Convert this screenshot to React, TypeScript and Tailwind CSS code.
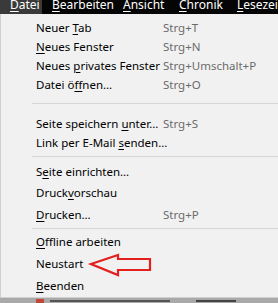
import type { ReactNode } from 'react'

type Item = { label: ReactNode; shortcut?: string; h: string } | { sep: string }

const u = (s: string) => <span className="underline underline-offset-2">{s}</span>

const ITEMS: Item[] = [
  { label: <>Neuer {u('T')}ab</>, shortcut: 'Strg+T', h: 'h-[19px]' },
  { label: <>{u('N')}eues Fenster</>, shortcut: 'Strg+N', h: 'h-[19px]' },
  { label: <>Neues {u('p')}rivates Fenster</>, shortcut: 'Strg+Umschalt+P', h: 'h-[19px]' },
  { label: <>Datei ö{u('f')}fnen…</>, shortcut: 'Strg+O', h: 'h-[19px]' },
  { sep: 'h-[20px]' },
  { label: <>Seite speichern {u('u')}nter…</>, shortcut: 'Strg+S', h: 'h-[20px]' },
  { label: <>Link per E-Mail {u('s')}enden…</>, h: 'h-[19px]' },
  { sep: 'h-[9px]' },
  { label: <>S{u('e')}ite einrichten…</>, h: 'h-[20px]' },
  { label: <>Druck{u('v')}orschau</>, h: 'h-[22px]' },
  { label: <>{u('D')}rucken…</>, shortcut: 'Strg+P', h: 'h-[22px]' },
  { sep: 'h-[6px]' },
  { label: <>{u('O')}ffline arbeiten</>, h: 'h-[22px]' },
  { label: <>Neustart</>, h: 'h-[22px]' },
  { label: <>{u('B')}eenden</>, h: 'h-[22px]' },
]

const BAR = [
  { first: 'D', rest: 'atei', w: 'w-[42px]', active: true },
  { first: 'B', rest: 'earbeiten', w: 'w-[71px]' },
  { first: 'A', rest: 'nsicht', w: 'w-[56px]' },
  { first: 'C', rest: 'hronik', w: 'w-[58px]' },
  { first: 'L', rest: 'esezeichen', w: 'w-[80px]' },
]

export default function App() {
  return (
    <div className="relative h-[303px] w-[278px] overflow-hidden bg-[#7a7a7a] font-['Noto_Sans',sans-serif] text-[11.5px]">
      {/* menu bar, cut off at the top */}
      <div className="flex h-[14px] items-end overflow-hidden whitespace-nowrap bg-[#050505] text-[12px] leading-[14px] text-white">
        {BAR.map((b) => (
          <div
            key={b.first}
            className={`h-full shrink-0 pl-[10px] ${b.w} ${b.active ? 'bg-[#3a3a3a]' : ''}`}
          >
            <span className="relative top-[-2px]">
              {u(b.first)}
              {b.rest}
            </span>
          </div>
        ))}
      </div>

      {/* dropdown */}
      <div className="flex h-[284px] flex-col border-b border-l border-[#cfcfcf] bg-[#f1f1f1] pt-[4px] text-black">
        {ITEMS.map((it, i) =>
          'sep' in it ? (
            <div key={i} className={`flex items-center pl-[31px] ${it.sep}`}>
              <div className="h-px flex-1 bg-[#d6d6d6]" />
            </div>
          ) : (
            <div key={i} className={`flex shrink-0 items-center whitespace-nowrap ${it.h}`}>
              <span className="w-[162px] pl-[35px]">{it.label}</span>
              {it.shortcut && <span className="text-[#6b6b6b]">{it.shortcut}</span>}
            </div>
          ),
        )}
      </div>

      {/* page underneath */}
      <div className="flex h-[5px] items-center gap-[6px] bg-[#a9a9a9] pl-[36px]">
        <div className="h-[4px] w-[8px] bg-[#c2453a]" />
        <div className="h-[2px] w-[120px] bg-[#555]" />
        <div className="ml-[20px] h-[2px] w-[40px] bg-[#444]" />
      </div>

      {/* red arrow annotation */}
      <svg className="absolute left-0 top-0" width="278" height="303" viewBox="0 0 278 303">
        <polygon
          points="91,264 118,255 118,259 150,259 150,270 118,270 118,275"
          fill="none"
          stroke="#e3201e"
          strokeWidth="2.2"
          strokeLinejoin="miter"
        />
      </svg>
    </div>
  )
}
